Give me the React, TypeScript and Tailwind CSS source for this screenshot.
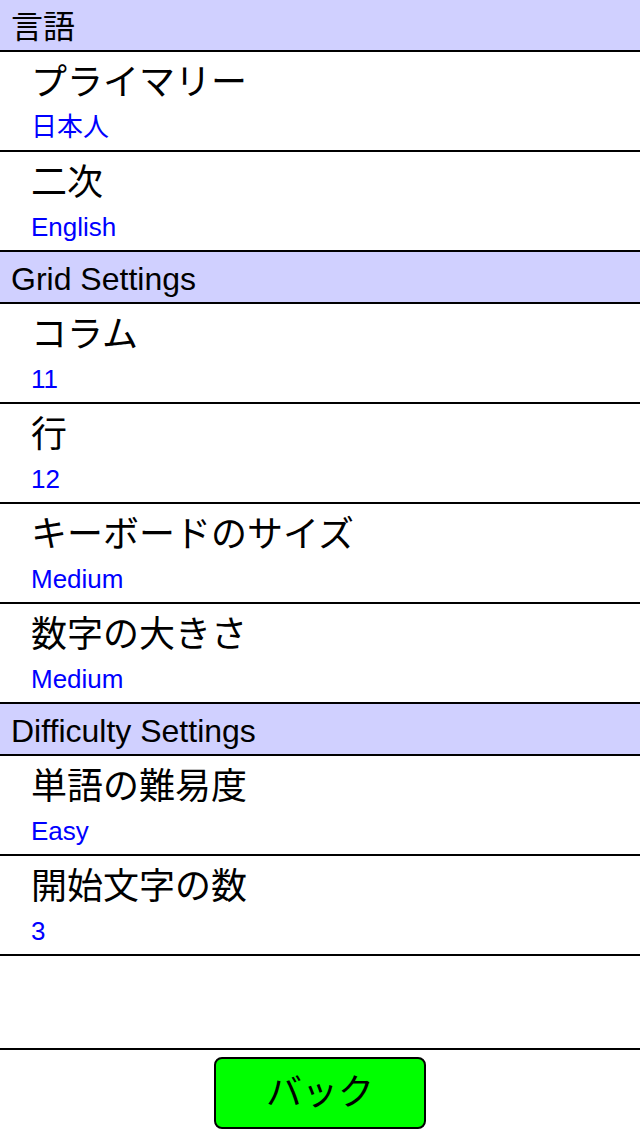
import React from "react";

type Row = { title: string; value: string };
type Section = { header: string; rows: Row[] };

const sections: Section[] = [
  {
    header: "言語",
    rows: [
      { title: "プライマリー", value: "日本人" },
      { title: "二次", value: "English" },
    ],
  },
  {
    header: "Grid Settings",
    rows: [
      { title: "コラム", value: "11" },
      { title: "行", value: "12" },
      { title: "キーボードのサイズ", value: "Medium" },
      { title: "数字の大きさ", value: "Medium" },
    ],
  },
  {
    header: "Difficulty Settings",
    rows: [
      { title: "単語の難易度", value: "Easy" },
      { title: "開始文字の数", value: "3" },
    ],
  },
];

export default function App() {
  return (
    <div
      className="w-[640px] h-[1136px] bg-white flex flex-col overflow-hidden"
      style={{ fontFamily: '"Liberation Sans", "Noto Sans CJK JP", sans-serif' }}
    >
      <div className="flex flex-col">
        {sections.map((s) => (
          <div key={s.header} className="flex flex-col">
            <div className="h-[52px] bg-[#d0d0ff] border-b-2 border-black pl-[11px] pt-[4px]">
              <span className="block text-[32px] leading-[46px] text-black whitespace-nowrap">{s.header}</span>
            </div>
            {s.rows.map((r) => (
              <div key={r.title} className="h-[100px] border-b-2 border-black pl-[31px] pt-[11px] flex flex-col">
                <span className="text-[36px] leading-[40px] text-black whitespace-nowrap">{r.title}</span>
                <span className="text-[26px] leading-[30px] text-[#0000ff] mt-[9px] whitespace-nowrap">{r.value}</span>
              </div>
            ))}
          </div>
        ))}
      </div>
      <div className="h-[94px] border-b-2 border-black" />
      <div className="flex justify-center pt-[7px]">
        <button className="w-[212px] h-[72px] bg-[#00ff00] border-2 border-black rounded-[8px] flex items-center justify-center text-[36px] leading-none text-black">
          バック
        </button>
      </div>
    </div>
  );
}
